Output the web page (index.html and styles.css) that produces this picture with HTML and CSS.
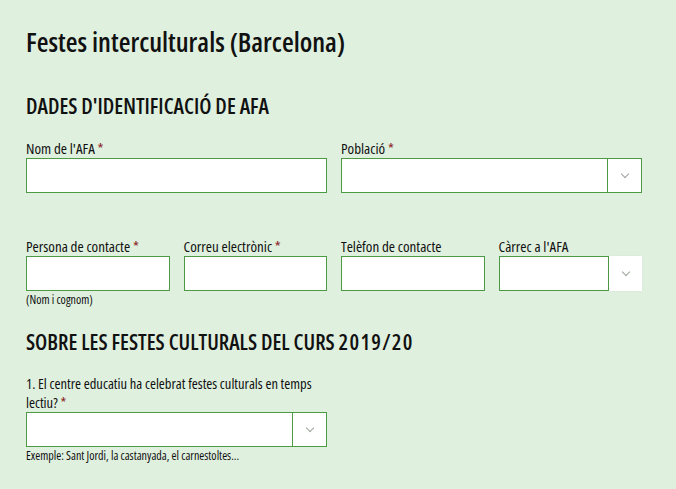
FILE: index.html
```html
<!DOCTYPE html>
<html lang="ca">
<head>
  <meta charset="UTF-8" />
  <meta name="viewport" content="width=device-width, initial-scale=1.0"/>
  <title>Festes interculturals (Barcelona)</title>
  <link rel="stylesheet" href="styles.css">
</head>
<body>
  <main class="form-page">
    <h1 class="page-title">Festes interculturals (Barcelona)</h1>

    <!-- IDENTIFICACIO -->
    <h2 class="section-title">DADES D'IDENTIFICACIÓ DE AFA</h2>
    <div class="row row-2">
      <div class="field">
        <label>Nom de l'AFA <span class="req">*</span></label>
        <input type="text" class="input">
      </div>
      <div class="field">
        <label>Població <span class="req">*</span></label>
        <div class="select">
          <div class="select-value"></div>
          <div class="select-btn"><span class="chev"></span></div>
        </div>
      </div>
    </div>

    <div class="row row-4">
      <div class="field">
        <label>Persona de contacte <span class="req">*</span></label>
        <input type="text" class="input">
        <small class="hint">(Nom i cognom)</small>
      </div>
      <div class="field">
        <label>Correu electrònic <span class="req">*</span></label>
        <input type="text" class="input">
      </div>
      <div class="field">
        <label>Telèfon de contacte</label>
        <input type="text" class="input">
      </div>
      <div class="field">
        <label>Càrrec a l'AFA</label>
        <div class="select select-open">
          <div class="select-value"></div>
          <div class="select-btn"><span class="chev"></span></div>
        </div>
      </div>
    </div>

    <!-- FESTES -->
    <h2 class="section-title section-2">SOBRE LES FESTES CULTURALS DEL CURS <span class="num">2019/20</span></h2>
    <div class="field question">
      <label><span class="line">1. El centre educatiu ha celebrat festes culturals en temps</span> <span class="line">lectiu? <span class="req">*</span></span></label>
      <div class="select select-q">
        <div class="select-value"></div>
        <div class="select-btn"><span class="chev"></span></div>
      </div>
      <small class="hint">Exemple: Sant Jordi, la castanyada, el carnestoltes...</small>
    </div>
  </main>
</body>
</html>
```

FILE: styles.css
```css
html, body {
  margin: 0;
  padding: 0;
  height: 100%;
  background: #dff0de;
  font-family: "Open Sans", "Liberation Sans", sans-serif;
  font-stretch: 75%;
  color: #111;
}

.form-page {
  width: 616px;
  padding: 26px 0 0 26px;
}

.page-title {
  margin: 0;
  font-size: 27px;
  line-height: 32px;
  font-weight: 600;
}

.section-title {
  margin: 35px 0 20px;
  font-size: 21.5px;
  line-height: 26px;
  font-weight: 600;
}

.section-2 {
  margin-top: 22px;
  margin-bottom: 19px;
}

.num {
  letter-spacing: 1.3px;
}

.row {
  display: grid;
  gap: 14px;
}

.row-2 {
  grid-template-columns: minmax(0, 1fr) minmax(0, 1fr);
  margin-bottom: 44px;
}

.row-4 {
  grid-template-columns: repeat(4, minmax(0, 1fr));
}

.field {
  display: flex;
  flex-direction: column;
}

.field label {
  font-size: 15px;
  line-height: 18px;
  font-weight: 500;
  margin: 0 0 1px;
}

.req {
  color: #8a1c1c;
}

.input {
  box-sizing: border-box;
  height: 35px;
  margin: 0;
  border: 1px solid #4d9a45;
  background: #fff;
}

.hint {
  font-size: 12px;
  line-height: 14px;
  font-weight: 500;
  margin-top: 2px;
}

.select {
  display: flex;
  height: 35px;
  box-sizing: border-box;
  border: 1px solid #4d9a45;
  background: #fff;
}

.select-value {
  flex: 1;
  border-right: 1px solid #4d9a45;
}

.select-btn {
  width: 33px;
  display: flex;
  align-items: center;
  justify-content: center;
}

.select-open {
  border: none;
  background: transparent;
}

.select-open .select-value {
  background: #fff;
  border: 1px solid #4d9a45;
}

.select-open .select-btn {
  background: #fff;
  box-shadow: 0 0 2px rgba(0, 0, 0, 0.06);
}

.chev {
  width: 5px;
  height: 5px;
  border-right: 1px solid #9aa59a;
  border-bottom: 1px solid #9aa59a;
  transform: translateY(-2px) rotate(45deg);
}

.question {
  width: 301px;
}

.question label {
  font-size: 14.5px;
  line-height: 19px;
  margin: 0;
}

.question .line {
  display: block;
}
```
